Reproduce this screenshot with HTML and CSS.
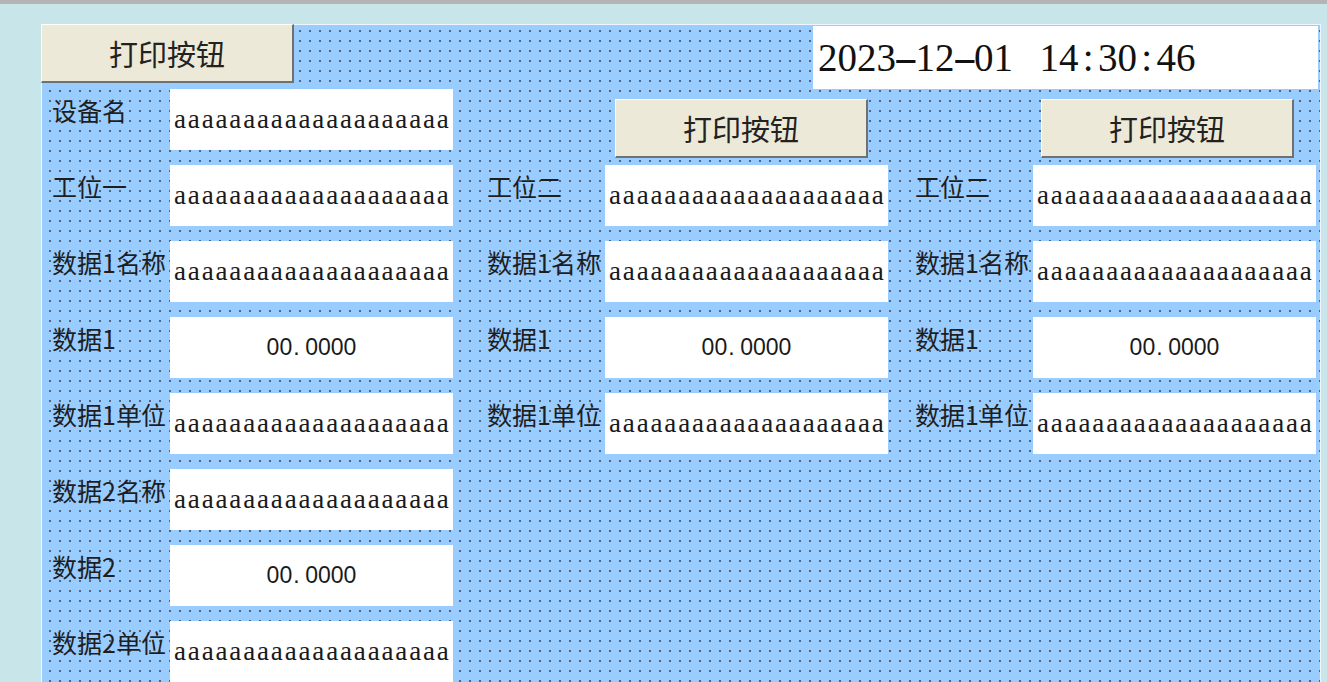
FILE: index.html
```html
<!DOCTYPE html>
<html lang="zh-CN">
<head>
<meta charset="utf-8">
<title>打印</title>
<link rel="stylesheet" href="styles.css">
</head>
<body>
<div class="canvas">
  <div class="header">
    <button class="btn">打印按钮</button>
    <div class="clock">2023<span class="sep dash">-</span>12<span class="sep dash">-</span>01<span class="sep gap"> </span>14<span class="sep">:</span>30<span class="sep">:</span>46</div>
  </div>
  <div class="cols">
    <div class="col col1">
      <div class="row"><div class="lbl">设备名</div><div class="box">aaaaaaaaaaaaaaaaaaaa</div></div>
      <div class="row"><div class="lbl">工位一</div><div class="box">aaaaaaaaaaaaaaaaaaaa</div></div>
      <div class="row"><div class="lbl">数据1名称</div><div class="box">aaaaaaaaaaaaaaaaaaaa</div></div>
      <div class="row"><div class="lbl">数据1</div><div class="box num">00<span class="dot">.</span>0000</div></div>
      <div class="row"><div class="lbl">数据1单位</div><div class="box">aaaaaaaaaaaaaaaaaaaa</div></div>
      <div class="row"><div class="lbl">数据2名称</div><div class="box">aaaaaaaaaaaaaaaaaaaa</div></div>
      <div class="row"><div class="lbl">数据2</div><div class="box num">00<span class="dot">.</span>0000</div></div>
      <div class="row"><div class="lbl">数据2单位</div><div class="box">aaaaaaaaaaaaaaaaaaaa</div></div>
    </div>
    <div class="col col2">
      <div class="btnrow"><button class="btn">打印按钮</button></div>
      <div class="row"><div class="lbl">工位二</div><div class="box">aaaaaaaaaaaaaaaaaaaa</div></div>
      <div class="row"><div class="lbl">数据1名称</div><div class="box">aaaaaaaaaaaaaaaaaaaa</div></div>
      <div class="row"><div class="lbl">数据1</div><div class="box num">00<span class="dot">.</span>0000</div></div>
      <div class="row"><div class="lbl">数据1单位</div><div class="box">aaaaaaaaaaaaaaaaaaaa</div></div>
    </div>
    <div class="col col3">
      <div class="btnrow"><button class="btn">打印按钮</button></div>
      <div class="row"><div class="lbl">工位二</div><div class="box">aaaaaaaaaaaaaaaaaaaa</div></div>
      <div class="row"><div class="lbl">数据1名称</div><div class="box">aaaaaaaaaaaaaaaaaaaa</div></div>
      <div class="row"><div class="lbl">数据1</div><div class="box num">00<span class="dot">.</span>0000</div></div>
      <div class="row"><div class="lbl">数据1单位</div><div class="box">aaaaaaaaaaaaaaaaaaaa</div></div>
    </div>
  </div>
</div>
</body>
</html>
```

FILE: styles.css
```css
html, body {
  margin: 0;
  padding: 0;
  height: 100%;
  overflow: hidden;
}
body {
  background: #c8e6e9;
  border-top: 4px solid #b4b4b4;
  box-sizing: border-box;
  font-family: "Noto Sans CJK SC", "Noto Sans", sans-serif;
  color: #1e1e1e;
}
.canvas {
  margin: 20px 0 0 41px;
  width: 1280px;
  height: 720px;
  box-sizing: border-box;
  border: 1px solid #eef6ff;
  border-bottom: none;
  background-color: #99ccff;
  background-image: radial-gradient(circle at 1px 1px, #56637c 0.85px, transparent 1.25px);
  background-size: 10px 10px;
  background-position: 7px 5px;
}
.header {
  display: flex;
  justify-content: space-between;
  align-items: flex-start;
  height: 64px;
}
.btn {
  width: 253px;
  height: 59px;
  box-sizing: border-box;
  background: #ece9d8;
  border-top: 1px solid #ffffff;
  border-left: 1px solid #ffffff;
  border-right: 2px solid #707070;
  border-bottom: 2px solid #707070;
  padding: 0;
  margin: 0;
  font-family: "Noto Sans CJK SC", "Noto Sans", sans-serif;
  font-size: 29px;
  line-height: 1;
  color: #222;
}
.header .btn {
  margin: -1px 0 0 -1px;
}
.clock {
  width: 505px;
  height: 63px;
  margin: 1px 2px 0 0;
  box-sizing: border-box;
  background: #fff;
  padding-left: 5px;
  display: flex;
  align-items: center;
  font-family: "Liberation Serif", "Times New Roman", serif;
  font-size: 39px;
  color: #111;
  white-space: pre;
}
.sep {
  display: inline-block;
  width: 0.5em;
  text-align: center;
}
.sep.gap {
  width: 0.68em;
}
.dash {
  transform: scaleX(1.9);
}
.cols {
  display: flex;
  align-items: flex-start;
  padding-left: 10px;
}
.col2 { margin-left: 34px; }
.col3 { margin-left: 27px; }
.row {
  display: flex;
  align-items: flex-start;
  margin-bottom: 15px;
}
.lbl {
  width: 118px;
  padding-top: 9px;
  font-size: 25px;
  line-height: 25px;
  white-space: nowrap;
  color: #1e1e1e;
}
.box {
  width: 283px;
  height: 61px;
  box-sizing: border-box;
  background: #fff;
  padding-left: 4px;
  display: flex;
  align-items: center;
  font-family: "Liberation Serif", "Times New Roman", serif;
  font-size: 27px;
  letter-spacing: 1.85px;
  color: #1a1a1a;
  white-space: nowrap;
  overflow: hidden;
}
.box.num {
  justify-content: center;
  padding-left: 0;
  font-family: "Liberation Sans", Arial, sans-serif;
  font-size: 23px;
  letter-spacing: 0;
}
.dot {
  display: inline-block;
  width: 13px;
  text-align: left;
  padding-left: 1px;
  box-sizing: border-box;
}
.btnrow {
  height: 76px;
  box-sizing: border-box;
  padding-top: 10px;
}
.col2 .btn { margin-left: 128px; }
.col3 .btn { margin-left: 126px; }
```
